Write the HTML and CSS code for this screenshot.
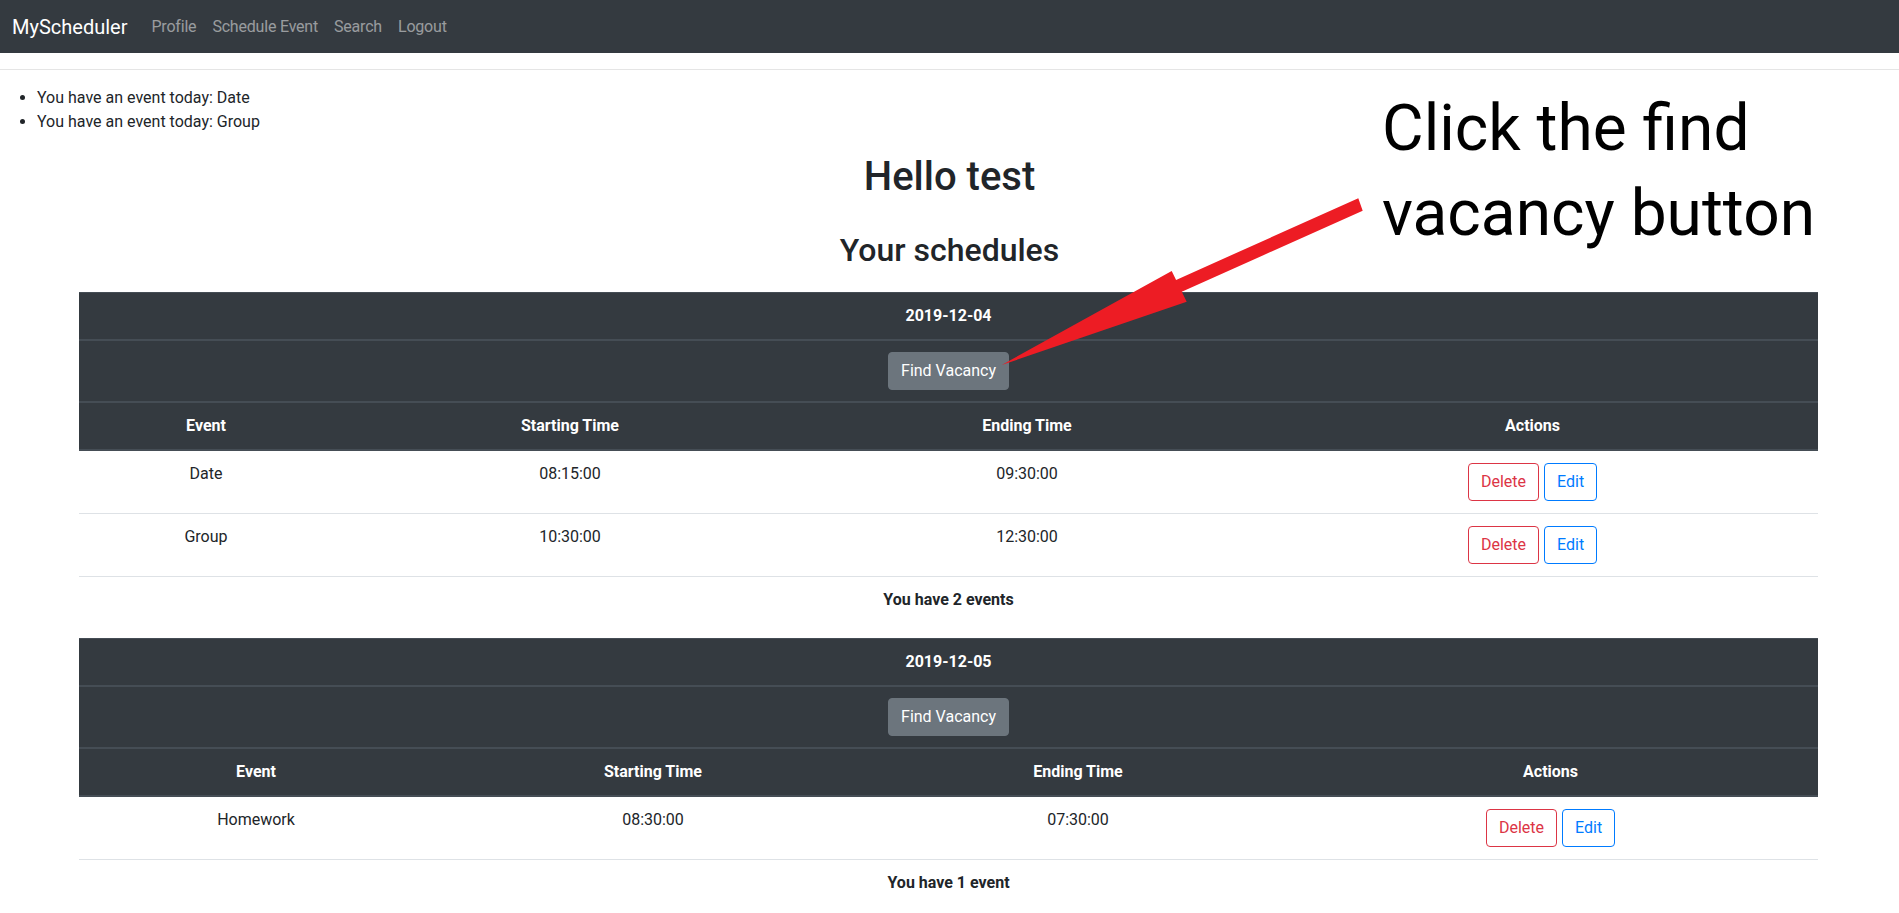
FILE: index.html
```html
<!DOCTYPE html>
<html lang="en">
<head>
<meta charset="utf-8">
<title>MyScheduler</title>
<link rel="stylesheet" href="styles.css">
</head>
<body>
<nav class="navbar">
  <a class="brand" href="#">MyScheduler</a>
  <a class="nav-link" href="#">Profile</a>
  <a class="nav-link" href="#">Schedule Event</a>
  <a class="nav-link" href="#">Search</a>
  <a class="nav-link" href="#">Logout</a>
</nav>
<hr class="divider">
<ul class="notices">
  <li>You have an event today: Date</li>
  <li>You have an event today: Group</li>
</ul>
<h1 class="title">Hello test</h1>
<h2 class="subtitle">Your schedules</h2>

<table class="schedule schedule-a">
  <colgroup><col class="c1"><col class="c2"><col class="c3"><col class="c4"></colgroup>
  <thead>
    <tr class="row-date"><th colspan="4">2019-12-04</th></tr>
    <tr class="row-find"><th colspan="4"><button class="btn btn-secondary btn-find">Find Vacancy</button></th></tr>
    <tr class="row-head"><th>Event</th><th>Starting Time</th><th>Ending Time</th><th>Actions</th></tr>
  </thead>
  <tbody>
    <tr class="row-data"><td>Date</td><td>08:15:00</td><td>09:30:00</td><td><div class="actions"><button class="btn btn-outline-danger">Delete</button><button class="btn btn-outline-primary">Edit</button></div></td></tr>
    <tr class="row-data"><td>Group</td><td>10:30:00</td><td>12:30:00</td><td><div class="actions"><button class="btn btn-outline-danger">Delete</button><button class="btn btn-outline-primary">Edit</button></div></td></tr>
    <tr class="row-total"><td colspan="4">You have 2 events</td></tr>
  </tbody>
</table>

<table class="schedule schedule-b">
  <colgroup><col class="c1"><col class="c2"><col class="c3"><col class="c4"></colgroup>
  <thead>
    <tr class="row-date"><th colspan="4">2019-12-05</th></tr>
    <tr class="row-find"><th colspan="4"><button class="btn btn-secondary btn-find">Find Vacancy</button></th></tr>
    <tr class="row-head"><th>Event</th><th>Starting Time</th><th>Ending Time</th><th>Actions</th></tr>
  </thead>
  <tbody>
    <tr class="row-data"><td>Homework</td><td>08:30:00</td><td>07:30:00</td><td><div class="actions"><button class="btn btn-outline-danger">Delete</button><button class="btn btn-outline-primary">Edit</button></div></td></tr>
    <tr class="row-total"><td colspan="4">You have 1 event</td></tr>
  </tbody>
</table>

<div class="callout">Click the find<br>vacancy button</div>
<svg class="arrow" width="380" height="185" viewBox="0 0 380 185" aria-hidden="true">
  <polygon points="368.3,8.3 372.7,20.7 191.8,101.8 196.7,111.7 11.7,175 181.7,81 186.1,89.9" fill="#ed1c24"/>
</svg>
</body>
</html>
```

FILE: styles.css
```css
html, body {
  margin: 0;
  padding: 0;
  overflow: hidden;
}

body {
  font-family: Roboto, "Liberation Sans", sans-serif;
  font-size: 16px;
  line-height: 24px;
  color: #212529;
  background: #fff;
  position: relative;
}

.navbar {
  display: flex;
  align-items: center;
  height: 53px;
  padding: 0 12px;
  background: #343a40;
}

.brand {
  font-size: 20px;
  line-height: 30px;
  color: #fff;
  text-decoration: none;
  margin-right: 16px;
}

.nav-link {
  padding: 0 8px;
  color: rgba(255, 255, 255, 0.5);
  text-decoration: none;
  letter-spacing: -0.2px;
}

.divider {
  margin: 16px 0;
  border: 0;
  border-top: 1px solid rgba(0, 0, 0, 0.1);
  height: 0;
}

.notices {
  margin: 0 0 19px;
  padding-left: 37px;
}

.title {
  margin: 0 0 30px;
  font-size: 40px;
  line-height: 48px;
  font-weight: 500;
  text-align: center;
}

.subtitle {
  margin: 0 0 23px;
  font-size: 32px;
  line-height: 38px;
  font-weight: 500;
  text-align: center;
}

.schedule {
  width: 1739px;
  margin: 0 0 15px 79px;
  border-collapse: separate;
  border-spacing: 0;
  table-layout: fixed;
}

.schedule-a .c1 { width: 254px; }
.schedule-a .c2 { width: 474px; }
.schedule-a .c3 { width: 440px; }
.schedule-a .c4 { width: 571px; }

.schedule-b .c1 { width: 354px; }
.schedule-b .c2 { width: 440px; }
.schedule-b .c3 { width: 410px; }
.schedule-b .c4 { width: 535px; }

.schedule th,
.schedule td {
  padding: 12px;
  line-height: 22px;
  text-align: center;
  vertical-align: top;
}

.schedule thead th {
  background: #343a40;
  color: #fff;
  font-weight: 700;
  border-bottom: 2px solid #454d55;
}

.schedule .row-date th {
  border-top: 1px solid #454d55;
}

.schedule .row-find th {
  padding: 11px 12px;
}

.schedule .row-data td {
  border-bottom: 1px solid #dee2e6;
}

.schedule .row-total td {
  font-weight: 700;
}

.btn {
  font-family: Roboto, "Liberation Sans", sans-serif;
  font-size: 16px;
  line-height: 24px;
  padding: 6px 12px;
  border: 1px solid transparent;
  border-radius: 4px;
  background: transparent;
  cursor: pointer;
}

.btn-find {
  display: block;
  margin: 0 auto;
}

.btn-secondary {
  background: #6c757d;
  border-color: #6c757d;
  color: #fff;
}

.btn-outline-danger {
  color: #dc3545;
  border-color: #dc3545;
}

.btn-outline-primary {
  color: #007bff;
  border-color: #007bff;
}

.actions {
  display: flex;
  justify-content: center;
  gap: 5px;
}

.callout {
  position: absolute;
  left: 1382px;
  top: 86px;
  font-size: 64px;
  line-height: 85px;
  color: #000;
  white-space: nowrap;
}

.arrow {
  position: absolute;
  left: 990px;
  top: 190px;
}
```
